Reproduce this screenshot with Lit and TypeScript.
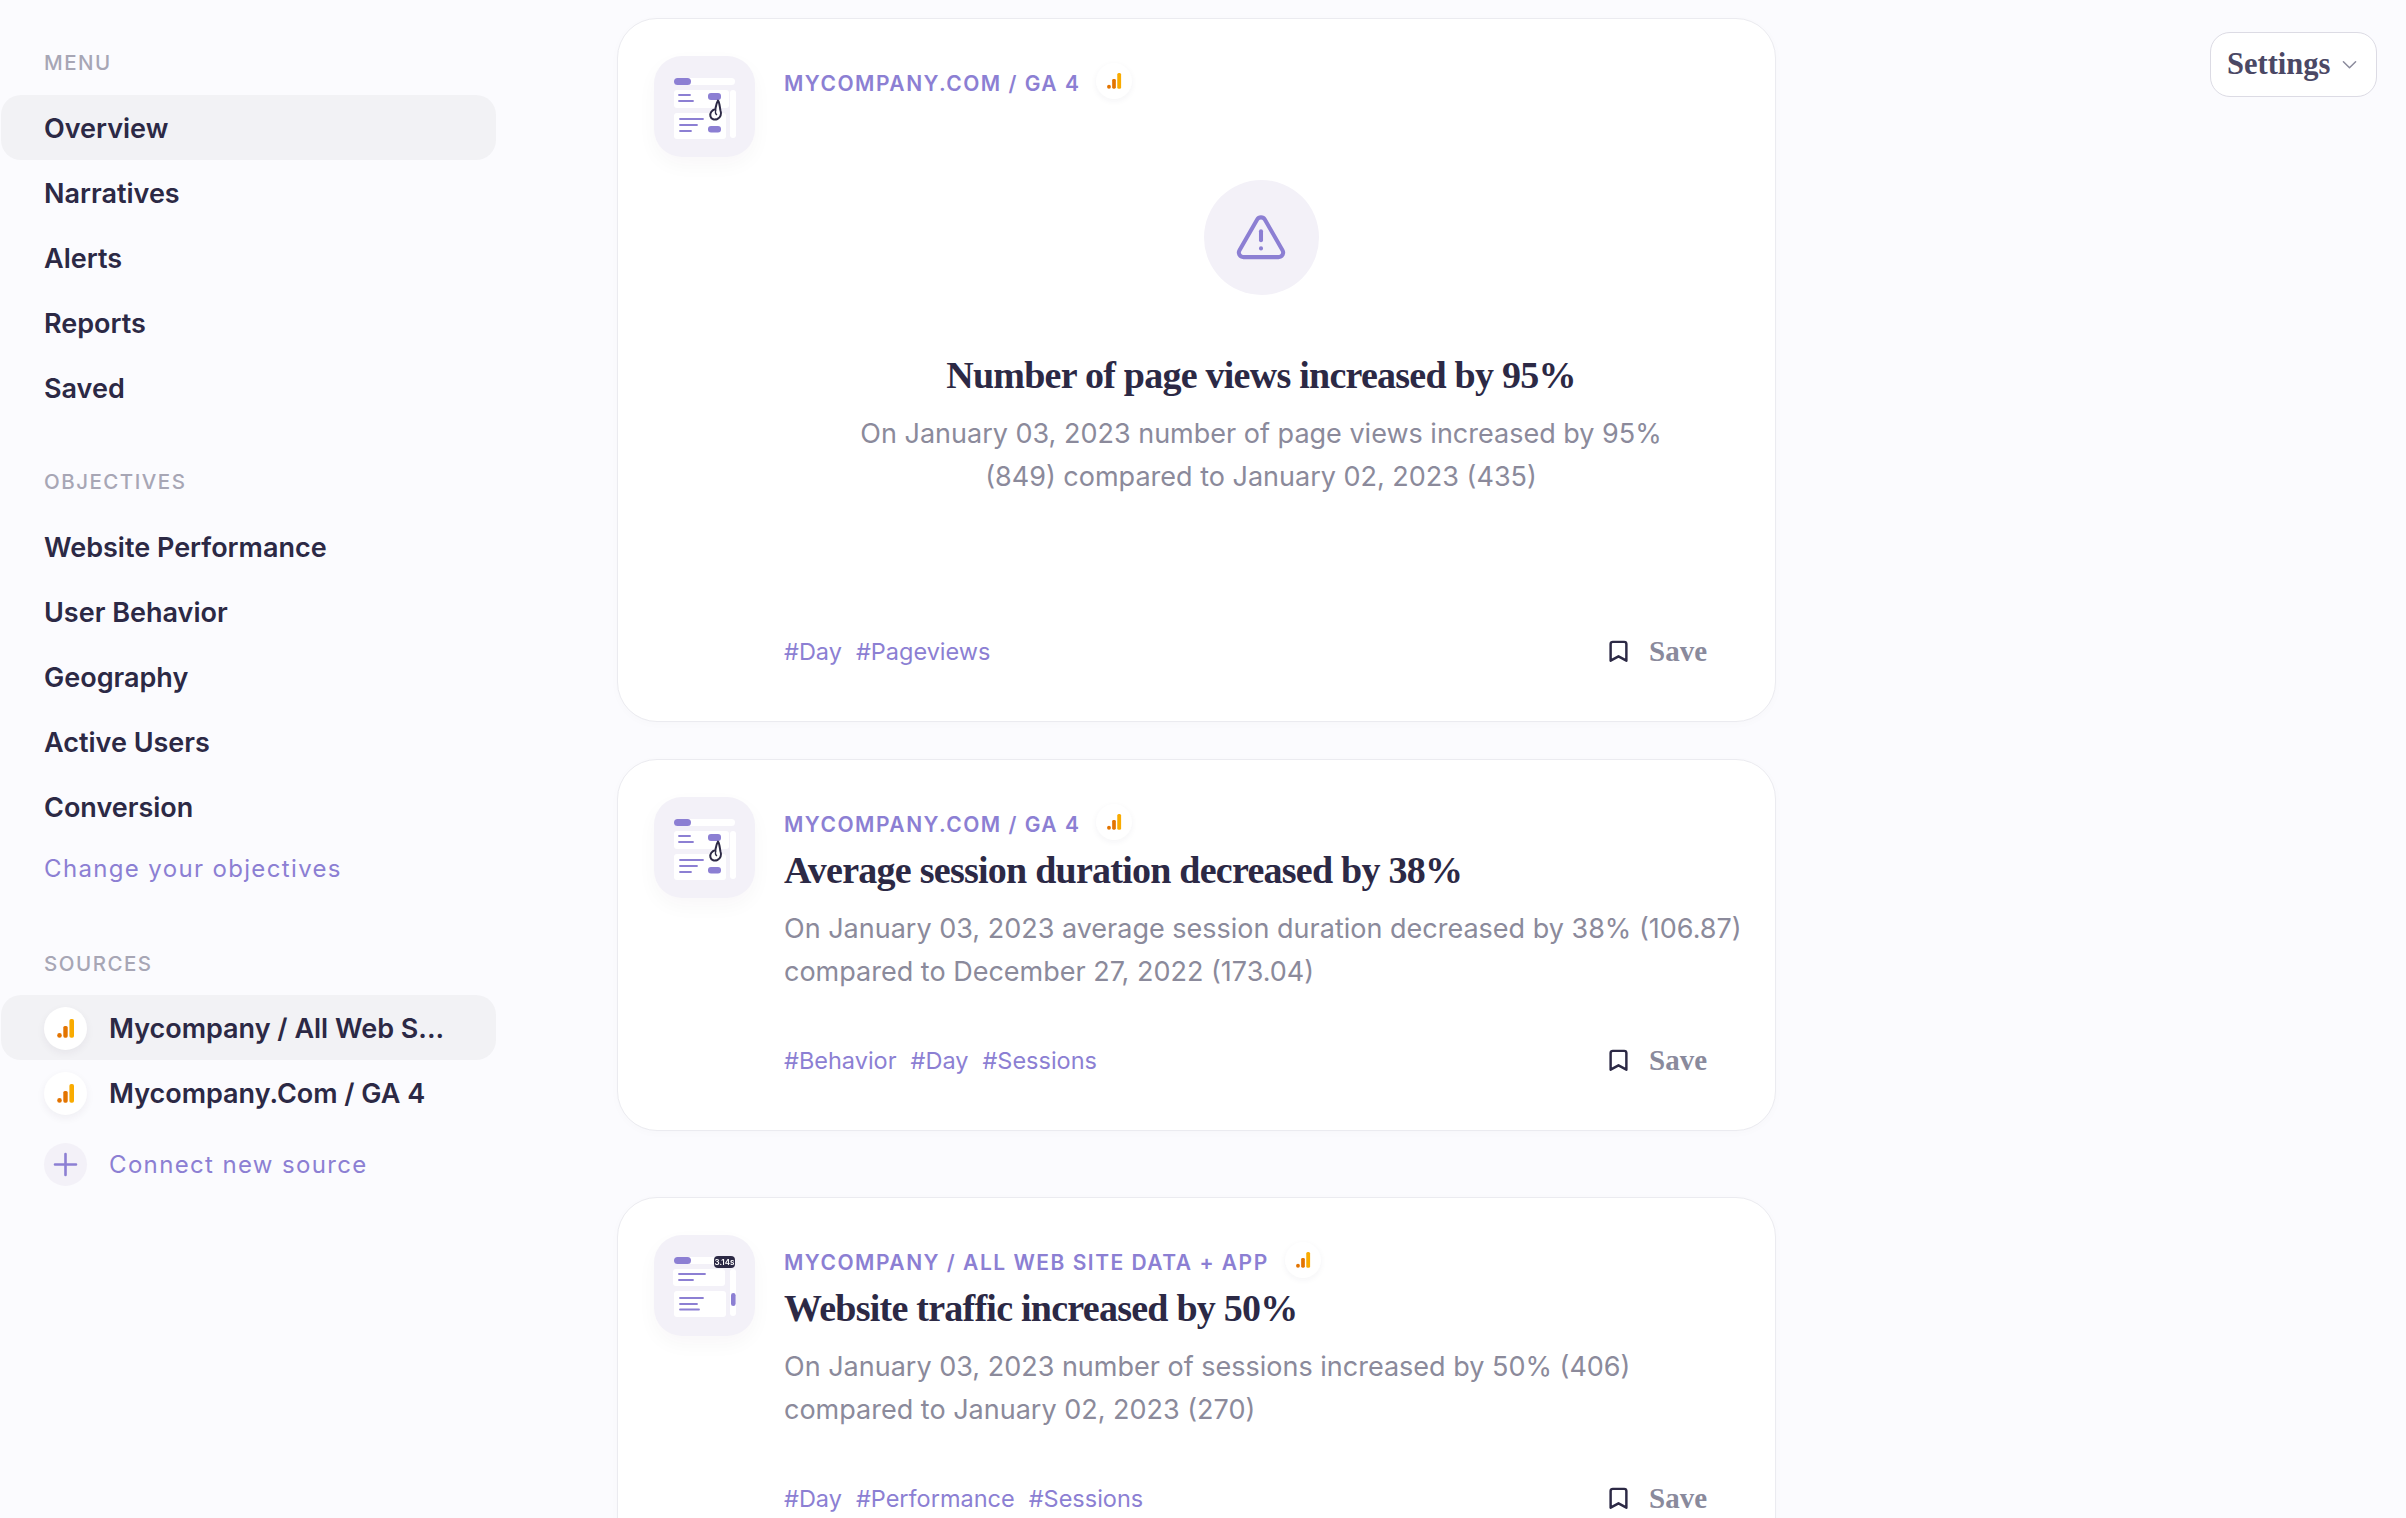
import { LitElement, html, css, svg } from 'lit';
import { customElement } from 'lit/decorators.js';
import { classMap } from 'lit/directives/class-map.js';

type Card = {
  source: string;
  title: string;
  lines: string[];
  tags: string[];
  thumb: 'hand' | 'badge';
  alert?: boolean;
};

const menu = ['Overview', 'Narratives', 'Alerts', 'Reports', 'Saved'];
const objectives = ['Website Performance', 'User Behavior', 'Geography', 'Active Users', 'Conversion'];

const cards: Card[] = [
  {
    source: 'MYCOMPANY.COM / GA 4',
    title: 'Number of page views increased by 95%',
    lines: ['On January 03, 2023 number of page views increased by 95%', '(849) compared to January 02, 2023 (435)'],
    tags: ['#Day', '#Pageviews'],
    thumb: 'hand',
    alert: true,
  },
  {
    source: 'MYCOMPANY.COM / GA 4',
    title: 'Average session duration decreased by 38%',
    lines: ['On January 03, 2023 average session duration decreased by 38% (106.87)', 'compared to December 27, 2022 (173.04)'],
    tags: ['#Behavior', '#Day', '#Sessions'],
    thumb: 'hand',
  },
  {
    source: 'MYCOMPANY / ALL WEB SITE DATA + APP',
    title: 'Website traffic increased by 50%',
    lines: ['On January 03, 2023 number of sessions increased by 50% (406)', 'compared to January 02, 2023 (270)'],
    tags: ['#Day', '#Performance', '#Sessions'],
    thumb: 'badge',
  },
];

const gaIcon = html`<svg viewBox="0 0 43 43" width="100%" height="100%">
  <circle cx="15.5" cy="28.4" r="2.3" fill="#e37400"></circle>
  <rect x="19.3" y="19" width="4.4" height="11.7" rx="1.6" fill="#e37400"></rect>
  <rect x="25.4" y="12" width="4.6" height="18.7" rx="1.8" fill="#f9ab00"></rect>
</svg>`;

const line = (x1: number, x2: number, y: number) =>
  svg`<line x1=${x1} x2=${x2} y1=${y} y2=${y} stroke="#8c7fd3" stroke-width="1.8" stroke-linecap="round"></line>`;

const thumbHand = html`<svg viewBox="0 0 101 101" width="101" height="101">
  <rect x="20" y="22" width="61" height="7" rx="3.5" fill="#fff"></rect>
  <rect x="20" y="22" width="17" height="7" rx="3.5" fill="#8c7fd3"></rect>
  <rect x="20" y="34" width="55" height="18" rx="3" fill="#fff"></rect>
  <rect x="20" y="57" width="52" height="26" rx="3" fill="#fff"></rect>
  <rect x="76" y="34" width="6" height="48" rx="3" fill="#fff"></rect>
  ${line(25, 36, 39)} ${line(25, 39, 45)}
  ${line(26, 49, 63)} ${line(26, 43, 69)} ${line(26, 37, 75)}
  <rect x="54" y="37" width="13" height="7" rx="3" fill="#8c7fd3"></rect>
  <rect x="54" y="70" width="13" height="6.5" rx="3" fill="#8c7fd3"></rect>
  <path d="M64 44.5C62.4 47 62 50 61.4 53C58 54 55.6 57 56.4 60.2C57.2 63.4 60.6 64.2 63.4 63C66.4 61.6 67.8 58 66.6 55C65.6 52 66 47 64 44.5Z"
    fill="#fff" stroke="#2c2945" stroke-width="2" stroke-linejoin="round"></path>
  <path d="M62 53.5C61 56 61.4 58 63 59" fill="none" stroke="#2c2945" stroke-width="1.4"></path>
</svg>`;

const thumbBadge = html`<svg viewBox="0 0 101 101" width="101" height="101">
  <rect x="20" y="22" width="61" height="7" rx="3.5" fill="#fff"></rect>
  <rect x="20" y="22" width="17" height="7" rx="3.5" fill="#8c7fd3"></rect>
  <rect x="60" y="21" width="21" height="12" rx="4" fill="#2c2945"></rect>
  <text x="70.5" y="30" text-anchor="middle" font-family="Inter, sans-serif" font-size="8" font-weight="600" fill="#fff">3.14s</text>
  <rect x="19" y="34" width="52" height="17" rx="3" fill="#fff"></rect>
  <rect x="20" y="56" width="52" height="26" rx="3" fill="#fff"></rect>
  <rect x="76" y="34" width="6" height="47" rx="3" fill="#fff"></rect>
  <rect x="77" y="58" width="4.6" height="13" rx="2.3" fill="#8c7fd3"></rect>
  ${line(25, 51, 39)} ${line(25, 39, 45)}
  ${line(26, 49, 63)} ${line(26, 43, 69)} ${line(26, 45, 74.5)}
</svg>`;

@customElement('app-root')
export class AppRoot extends LitElement {
  static styles = css`
    :host {
      display: flex;
      height: 1518px;
      overflow: hidden;
      background: #fbfbfe;
      color: #2c2945;
      font-family: Inter, 'Liberation Sans', sans-serif;
    }

    /* Sidebar */
    .sidebar {
      flex: none;
      box-sizing: border-box;
      width: 495px;
      margin-left: 1px;
      padding-top: 47px;
    }

    .label {
      height: 30px;
      margin: 0 0 18px 43px;
      font-size: 20.5px;
      line-height: 32px;
      font-weight: 500;
      letter-spacing: 1.5px;
      color: #a7a6b5;
    }

    .group + .group {
      margin-top: 46px;
    }

    .group.sources {
      margin-top: 59px;
    }

    .group.sources .label {
      margin-bottom: 17px;
    }

    .row {
      box-sizing: border-box;
      display: flex;
      align-items: center;
      height: 65px;
      padding: 1px 0 0 43px;
      border-radius: 20px;
      font-size: 27px;
      font-weight: 600;
    }

    .row.active {
      background: #f2f2f5;
    }

    .link {
      height: 40px;
      margin-top: 10px;
      padding-left: 43px;
      font-size: 24px;
      line-height: 40px;
      letter-spacing: 1.35px;
      color: #8c7fd3;
    }

    .source-icon {
      flex: none;
      width: 43px;
      height: 43px;
      margin-right: 22px;
      border-radius: 50%;
      background: #fff;
      box-shadow: 0 3px 8px rgba(44, 41, 69, 0.06);
    }

    .connect {
      display: flex;
      align-items: center;
      height: 65px;
      margin-top: 7px;
      padding-left: 43px;
      font-size: 24px;
      letter-spacing: 1.35px;
      color: #8c7fd3;
    }

    .plus {
      flex: none;
      display: flex;
      width: 43px;
      height: 43px;
      margin-right: 22px;
      border-radius: 50%;
      background: #f3f1f8;
    }

    /* Cards */
    .feed {
      flex: none;
      width: 1159px;
      margin-left: 121px;
      padding-top: 18px;
    }

    .card {
      box-sizing: border-box;
      display: flex;
      padding: 0 37px 50px 36px;
      background: #fff;
      border: 1px solid #ebebf0;
      border-radius: 40px;
      box-shadow: 0 2px 10px rgba(44, 41, 69, 0.02);
    }

    .card + .card {
      margin-top: 37px;
    }

    .card:last-child {
      margin-top: 66px;
    }

    .thumb {
      flex: none;
      width: 101px;
      height: 101px;
      margin-top: 37px;
      margin-right: 29px;
      border-radius: 28px;
      background: #f3f1f8;
      box-shadow: 0 8px 20px rgba(44, 41, 69, 0.035);
    }

    .thumb svg {
      display: block;
      filter: blur(0.4px);
    }

    .content {
      flex: 1;
      min-width: 0;
      padding-top: 47px;
    }

    .source {
      display: flex;
      align-items: center;
      height: 34px;
      font-size: 21px;
      font-weight: 600;
      letter-spacing: 1.5px;
      color: #8c7fd3;
    }

    .source-badge {
      flex: none;
      width: 36px;
      height: 36px;
      margin-top: -5px;
      margin-left: 16px;
      border-radius: 50%;
      background: #fff;
      box-shadow: 0 2px 6px rgba(44, 41, 69, 0.05);
    }

    .alert {
      width: 115px;
      height: 115px;
      margin: 80px auto 0;
      display: flex;
      align-items: center;
      justify-content: center;
      border-radius: 50%;
      background: #f3f1f8;
    }

    h2 {
      margin: 6px 0 0;
      font-family: 'Liberation Serif', serif;
      font-size: 38px;
      line-height: 46px;
      font-weight: 700;
      letter-spacing: -0.75px;
      color: #2c2945;
    }

    .centered {
      text-align: center;
    }

    .alert + h2 {
      margin-top: 57px;
    }

    .body {
      margin-top: 14px;
      font-size: 27px;
      line-height: 43px;
      white-space: nowrap;
      color: #8b8a9b;
    }

    .footer {
      display: flex;
      align-items: center;
      height: 40px;
      margin-top: 47px;
    }

    .centered-card .footer {
      margin-top: 133px;
    }

    .tags {
      display: flex;
      gap: 14px;
      flex: 1;
      font-size: 23.5px;
      color: #8c7fd3;
    }

    .save {
      display: flex;
      align-items: center;
      gap: 20px;
      margin-right: 31px;
      font-family: 'Liberation Serif', serif;
      font-size: 29px;
      font-weight: 700;
      color: #8a8a9c;
    }

    /* Settings */
    .top-right {
      flex: 1;
      display: flex;
      justify-content: flex-end;
      align-items: flex-start;
      padding: 32px 29px 0 0;
    }

    .settings {
      box-sizing: border-box;
      display: flex;
      align-items: center;
      gap: 12px;
      width: 167px;
      height: 65px;
      padding-left: 16px;
      background: #fff;
      border: 1px solid #dcdbe4;
      border-radius: 20px;
      font-family: 'Liberation Serif', serif;
      font-size: 30.5px;
      font-weight: 700;
      color: #4b4865;
    }
  `;

  private _renderCard(card: Card) {
    return html`
      <article class=${classMap({ card: true, 'centered-card': !!card.alert })}>
        <div class="thumb">${card.thumb === 'hand' ? thumbHand : thumbBadge}</div>
        <div class="content">
          <div class="source">
            ${card.source}
            <span class="source-badge">${gaIcon}</span>
          </div>
          ${card.alert
            ? html`<div class="alert">
                <svg viewBox="0 0 48 48" width="54" height="54" fill="none" stroke="#8c7fd3" stroke-width="3.6" stroke-linecap="round" stroke-linejoin="round">
                  <path d="M20.6 7.6L4.9 34.9C3.3 37.6 5.2 41 8.4 41H39.6C42.8 41 44.7 37.6 43.1 34.9L27.4 7.6C25.9 5 22.1 5 20.6 7.6Z"></path>
                  <path d="M24 18V26"></path>
                  <path d="M24 33.2V33.4"></path>
                </svg>
              </div>`
            : ''}
          <h2 class=${classMap({ centered: !!card.alert })}>${card.title}</h2>
          <div class=${classMap({ body: true, centered: !!card.alert })}>
            ${card.lines.map((l) => html`<div>${l}</div>`)}
          </div>
          <div class="footer">
            <div class="tags">${card.tags.map((t) => html`<span>${t}</span>`)}</div>
            <div class="save">
              <svg viewBox="0 0 24 26" width="21" height="23" fill="none" stroke="#2c2945" stroke-width="2.8" stroke-linejoin="round">
                <path d="M3 4.5C3 3 4 2 5.5 2H18.5C20 2 21 3 21 4.5V23.5L12 18.5L3 23.5V4.5Z"></path>
              </svg>
              Save
            </div>
          </div>
        </div>
      </article>
    `;
  }

  render() {
    return html`
      <nav class="sidebar">
        <div class="group">
          <div class="label">MENU</div>
          ${menu.map((m, i) => html`<div class=${classMap({ row: true, active: i === 0 })}>${m}</div>`)}
        </div>
        <div class="group">
          <div class="label">OBJECTIVES</div>
          ${objectives.map((o) => html`<div class="row">${o}</div>`)}
          <div class="link">Change your objectives</div>
        </div>
        <div class="group sources">
          <div class="label">SOURCES</div>
          <div class="row active"><span class="source-icon">${gaIcon}</span>Mycompany / All Web S...</div>
          <div class="row"><span class="source-icon">${gaIcon}</span>Mycompany.Com / GA 4</div>
          <div class="connect">
            <span class="plus">
              <svg viewBox="0 0 43 43" width="43" height="43" stroke="#8c7fd3" stroke-width="2.6" stroke-linecap="round">
                <path d="M21.5 11V32M11 21.5H32"></path>
              </svg>
            </span>
            Connect new source
          </div>
        </div>
      </nav>
      <main class="feed">${cards.map((c) => this._renderCard(c))}</main>
      <div class="top-right">
        <div class="settings">
          Settings
          <svg viewBox="0 0 16 10" width="15" height="10" fill="none" stroke="#8a8a9c" stroke-width="1.6" stroke-linecap="round" stroke-linejoin="round">
            <path d="M1.5 1.5L8 8L14.5 1.5"></path>
          </svg>
        </div>
      </div>
    `;
  }
}

declare global {
  interface HTMLElementTagNameMap {
    'app-root': AppRoot;
  }
}
